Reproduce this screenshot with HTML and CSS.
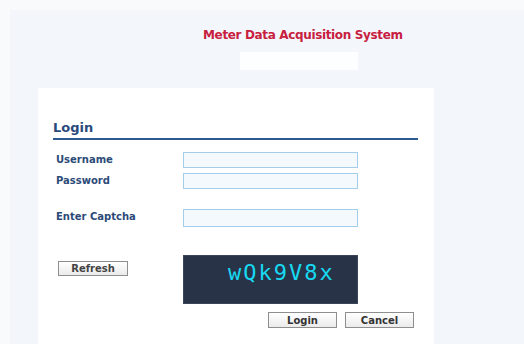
FILE: index.html
```html
<!DOCTYPE html>
<html>
<head>
<meta charset="utf-8">
<link rel="stylesheet" href="styles.css">
</head>
<body>
<div class="page">
  <div class="header">
    <h1 class="title">Meter Data Acquisition System</h1>
    <div class="logo-box"></div>
  </div>
  <div class="panel">
    <h2 class="heading">Login</h2>
    <div class="form">
      <label class="lbl">Username</label>
      <input class="field" type="text">
      <label class="lbl">Password</label>
      <input class="field" type="password">
      <label class="lbl lbl-captcha">Enter Captcha</label>
      <input class="field field-captcha" type="text">
      <div class="refresh-cell"><button class="btn btn-refresh">Refresh</button></div>
      <div class="captcha">wQk9V8x</div>
    </div>
    <div class="actions">
      <button class="btn btn-action">Login</button>
      <button class="btn btn-action">Cancel</button>
    </div>
  </div>
</div>
</body>
</html>
```

FILE: styles.css
```css
html, body {
  margin: 0;
  padding: 0;
}
body {
  background: #f8fafc;
  font-family: "DejaVu Sans", Verdana, sans-serif;
  overflow: hidden;
}
.page {
  box-sizing: border-box;
  height: 334px;
  margin: 10px 0 0 10px;
  background: #f3f7fc;
  padding-top: 17px;
  display: flex;
  flex-direction: column;
}
.header {
  padding-left: 193px;
}
.title {
  margin: 0;
  font-size: 12px;
  line-height: 16px;
  font-weight: bold;
  letter-spacing: -0.35px;
  color: #c8203f;
}
.logo-box {
  width: 118px;
  height: 18px;
  margin: 9px 0 0 37px;
  background: #fdfeff;
}
.panel {
  flex: 1;
  margin: 18px 0 0 28px;
  width: 381px;
  background: #ffffff;
  padding: 32px 0 0 15px;
}
.heading {
  margin: 0;
  width: 365px;
  font-size: 13px;
  line-height: 16px;
  font-weight: bold;
  color: #2a4a7c;
  padding-bottom: 2px;
  border-bottom: 2px solid #2b5b91;
}
.form {
  margin-top: 12px;
  display: grid;
  grid-template-columns: 130px 175px;
  row-gap: 5px;
  align-items: start;
}
.lbl {
  padding-left: 3px;
  font-size: 10px;
  line-height: 15px;
  font-weight: bold;
  color: #2c4a78;
}
.field {
  box-sizing: border-box;
  width: 175px;
  height: 16px;
  margin: 0;
  padding: 0;
  border: 1px solid #a3cde9;
  background: #f3f9fc;
}
.lbl-captcha, .field-captcha {
  margin-top: 15px;
}
.field-captcha {
  height: 18px;
}
.refresh-cell {
  margin-top: 23px;
  padding: 6px 0 0 5px;
  display: flex;
}
.captcha {
  margin-top: 23px;
  box-sizing: border-box;
  width: 175px;
  height: 49px;
  background: #283348;
  border: 1px solid #3a4558;
  color: #17d9f1;
  font-family: "DejaVu Sans Mono", monospace;
  font-size: 22px;
  letter-spacing: 2px;
  padding: 4px 0 0 44px;
  line-height: 26px;
}
.btn {
  box-sizing: border-box;
  height: 15px;
  margin: 0;
  padding: 0;
  border: 1px solid #8e8e8e;
  background: linear-gradient(#ffffff, #ebebeb);
  font-family: "DejaVu Sans", Verdana, sans-serif;
  font-size: 10px;
  font-weight: bold;
  color: #444;
  line-height: 13px;
}
.btn-refresh {
  width: 70px;
}
.actions {
  display: flex;
  gap: 8px;
  margin: 8px 0 0 215px;
}
.btn-action {
  width: 69px;
  height: 16px;
  color: #333;
}
```
